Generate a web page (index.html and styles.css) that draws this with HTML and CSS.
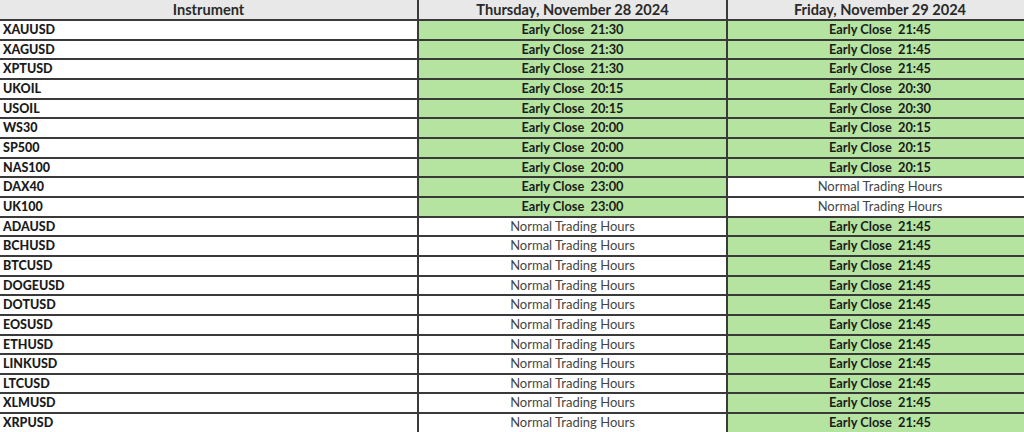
FILE: index.html
```html
<!DOCTYPE html>
<html>
<head>
<meta charset="utf-8">
<link rel="stylesheet" href="styles.css">
</head>
<body>
<div class="frame">
<table class="hours">
  <colgroup>
    <col class="c-inst">
    <col class="c-day">
    <col class="c-day2">
  </colgroup>
  <thead>
    <tr class="head-row">
      <th>Instrument</th>
      <th>Thursday, November 28 2024</th>
      <th>Friday, November 29 2024</th>
    </tr>
  </thead>
  <tbody>
    <tr><td class="inst">XAUUSD</td><td class="early">Early Close  21:30</td><td class="early">Early Close  21:45</td></tr>
    <tr><td class="inst">XAGUSD</td><td class="early">Early Close  21:30</td><td class="early">Early Close  21:45</td></tr>
    <tr><td class="inst">XPTUSD</td><td class="early">Early Close  21:30</td><td class="early">Early Close  21:45</td></tr>
    <tr><td class="inst">UKOIL</td><td class="early">Early Close  20:15</td><td class="early">Early Close  20:30</td></tr>
    <tr><td class="inst">USOIL</td><td class="early">Early Close  20:15</td><td class="early">Early Close  20:30</td></tr>
    <tr><td class="inst">WS30</td><td class="early">Early Close  20:00</td><td class="early">Early Close  20:15</td></tr>
    <tr><td class="inst">SP500</td><td class="early">Early Close  20:00</td><td class="early">Early Close  20:15</td></tr>
    <tr><td class="inst">NAS100</td><td class="early">Early Close  20:00</td><td class="early">Early Close  20:15</td></tr>
    <tr><td class="inst">DAX40</td><td class="early">Early Close  23:00</td><td class="normal">Normal Trading Hours</td></tr>
    <tr><td class="inst">UK100</td><td class="early">Early Close  23:00</td><td class="normal">Normal Trading Hours</td></tr>
    <tr><td class="inst">ADAUSD</td><td class="normal">Normal Trading Hours</td><td class="early">Early Close  21:45</td></tr>
    <tr><td class="inst">BCHUSD</td><td class="normal">Normal Trading Hours</td><td class="early">Early Close  21:45</td></tr>
    <tr><td class="inst">BTCUSD</td><td class="normal">Normal Trading Hours</td><td class="early">Early Close  21:45</td></tr>
    <tr><td class="inst">DOGEUSD</td><td class="normal">Normal Trading Hours</td><td class="early">Early Close  21:45</td></tr>
    <tr><td class="inst">DOTUSD</td><td class="normal">Normal Trading Hours</td><td class="early">Early Close  21:45</td></tr>
    <tr><td class="inst">EOSUSD</td><td class="normal">Normal Trading Hours</td><td class="early">Early Close  21:45</td></tr>
    <tr><td class="inst">ETHUSD</td><td class="normal">Normal Trading Hours</td><td class="early">Early Close  21:45</td></tr>
    <tr><td class="inst">LINKUSD</td><td class="normal">Normal Trading Hours</td><td class="early">Early Close  21:45</td></tr>
    <tr><td class="inst">LTCUSD</td><td class="normal">Normal Trading Hours</td><td class="early">Early Close  21:45</td></tr>
    <tr><td class="inst">XLMUSD</td><td class="normal">Normal Trading Hours</td><td class="early">Early Close  21:45</td></tr>
    <tr><td class="inst">XRPUSD</td><td class="normal">Normal Trading Hours</td><td class="early">Early Close  21:45</td></tr>
  </tbody>
</table>
</div>
</body>
</html>
```
FILE: styles.css
```css
html, body {
  margin: 0;
  padding: 0;
  background: #ffffff;
  overflow: hidden;
}
.frame {
  width: 1024px;
  height: 432px;
  overflow: hidden;
  position: relative;
}
.hours {
  border-collapse: collapse;
  table-layout: fixed;
  width: 1034px;
  margin-left: -2px;
  font-family: Lato, "Open Sans", sans-serif;
  color: #1b1b1b;
}
.c-inst { width: 419px; }
.c-day { width: 309px; }
.c-day2 { width: 306px; }
.hours th,
.hours td {
  border: 2px solid #3a3a3a;
  padding: 0;
  height: 17.65px;
  line-height: 17.65px;
  white-space: pre;
  overflow: hidden;
}
.hours th {
  background: #e8e8e8;
  font-size: 14.6px;
  font-weight: 700;
  text-align: center;
  height: 19px;
  line-height: 19px;
  border-top: none;
  color: #2a2a2a;
}
.hours td.inst {
  text-align: left;
  padding-left: 3px;
  font-size: 12.5px;
  font-weight: 900;
}
.hours td.early {
  background: #b5e3a0;
  text-align: center;
  font-size: 12.8px;
  font-weight: 700;
}
.hours td.normal {
  background: #ffffff;
  text-align: center;
  font-size: 13px;
  font-weight: 400;
  color: #454545;
}
```
